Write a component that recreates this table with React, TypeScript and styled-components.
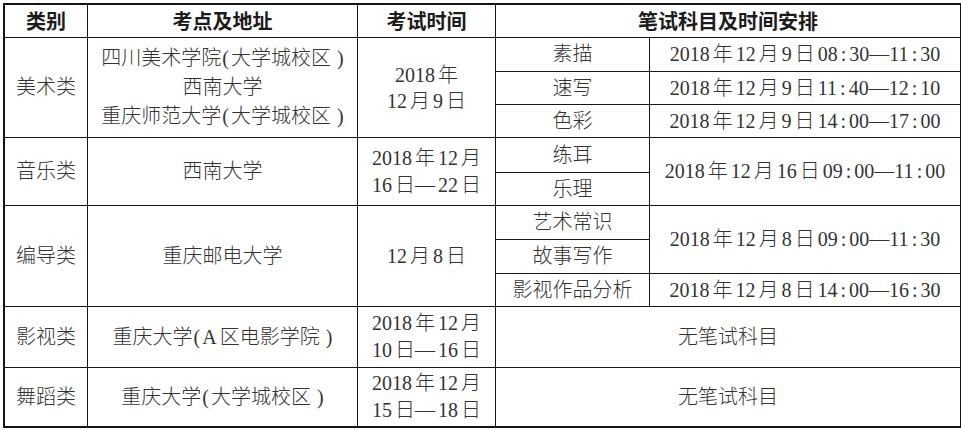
import React from "react";
import styled, { createGlobalStyle } from "styled-components";

const GlobalStyle = createGlobalStyle`
  html, body {
    margin: 0;
    padding: 0;
    background: #ffffff;
  }
`;

type CellData = {
  row: string;
  col: string;
  lines: string[];
  leading?: number;
};

const header: CellData[] = [
  { row: "1", col: "1", lines: ["类别"] },
  { row: "1", col: "2", lines: ["考点及地址"] },
  { row: "1", col: "3", lines: ["考试时间"] },
  { row: "1", col: "4 / span 2", lines: ["笔试科目及时间安排"] },
];

const body: CellData[] = [
  // 美术类
  { row: "2 / span 3", col: "1", lines: ["美术类"] },
  {
    row: "2 / span 3",
    col: "2",
    lines: ["四川美术学院(大学城校区)", "西南大学", "重庆师范大学(大学城校区)"],
    leading: 29,
  },
  { row: "2 / span 3", col: "3", lines: ["2018年", "12月9日"], leading: 26 },
  { row: "2", col: "4", lines: ["素描"] },
  { row: "2", col: "5", lines: ["2018年12月9日08:30—11:30"] },
  { row: "3", col: "4", lines: ["速写"] },
  { row: "3", col: "5", lines: ["2018年12月9日11:40—12:10"] },
  { row: "4", col: "4", lines: ["色彩"] },
  { row: "4", col: "5", lines: ["2018年12月9日14:00—17:00"] },

  // 音乐类
  { row: "5 / span 2", col: "1", lines: ["音乐类"] },
  { row: "5 / span 2", col: "2", lines: ["西南大学"] },
  { row: "5 / span 2", col: "3", lines: ["2018年12月", "16日—22日"] },
  { row: "5", col: "4", lines: ["练耳"] },
  { row: "6", col: "4", lines: ["乐理"] },
  { row: "5 / span 2", col: "5", lines: ["2018年12月16日09:00—11:00"] },

  // 编导类
  { row: "7 / span 3", col: "1", lines: ["编导类"] },
  { row: "7 / span 3", col: "2", lines: ["重庆邮电大学"] },
  { row: "7 / span 3", col: "3", lines: ["12月8日"] },
  { row: "7", col: "4", lines: ["艺术常识"] },
  { row: "8", col: "4", lines: ["故事写作"] },
  { row: "7 / span 2", col: "5", lines: ["2018年12月8日09:00—11:30"] },
  { row: "9", col: "4", lines: ["影视作品分析"] },
  { row: "9", col: "5", lines: ["2018年12月8日14:00—16:30"] },

  // 影视类
  { row: "10", col: "1", lines: ["影视类"] },
  { row: "10", col: "2", lines: ["重庆大学(A区电影学院)"] },
  { row: "10", col: "3", lines: ["2018年12月", "10日—16日"] },
  { row: "10", col: "4 / span 2", lines: ["无笔试科目"] },

  // 舞蹈类
  { row: "11", col: "1", lines: ["舞蹈类"] },
  { row: "11", col: "2", lines: ["重庆大学(大学城校区)"] },
  { row: "11", col: "3", lines: ["2018年12月", "15日—18日"] },
  { row: "11", col: "4 / span 2", lines: ["无笔试科目"] },
];

const isCJK = (s?: string) => !!s && /[\u4e00-\u9fff]/.test(s);

// digits and latin letters get a small gap next to CJK, colons get air on both sides
function typeset(text: string) {
  const parts = text.split(/([0-9A-Za-z]+|:|\(|\))/).filter(Boolean);
  return parts.map((p, i) => {
    if (p === ":") return <Colon key={i}>:</Colon>;
    if (p === "(" || p === ")") {
      return (
        <Paren key={i} $open={p === "("}>
          {p}
        </Paren>
      );
    }
    if (/^[0-9A-Za-z]+$/.test(p)) {
      return (
        <Latin key={i} $left={isCJK(parts[i - 1])} $right={isCJK(parts[i + 1])}>
          {p}
        </Latin>
      );
    }
    return <React.Fragment key={i}>{p}</React.Fragment>;
  });
}

export default function App() {
  return (
    <>
      <GlobalStyle />
      <Table>
        {header.map((c, i) => (
          <HeadCell key={i} $row={c.row} $col={c.col}>
            {c.lines[0]}
          </HeadCell>
        ))}
        {body.map((c, i) => (
          <Cell key={i} $row={c.row} $col={c.col} $leading={c.leading ?? 27}>
            {c.lines.map((line, j) => (
              <Line key={j}>{typeset(line)}</Line>
            ))}
          </Cell>
        ))}
      </Table>
    </>
  );
}

const Table = styled.div`
  display: grid;
  grid-template-columns: 82px 269px 137px 153px 310px;
  grid-template-rows: 32px 33px 32px 32px 34px 32px 33px 33px 32px 60px 58px;
  gap: 1px;
  width: 958px;
  margin: 3px 0 0 3px;
  padding: 2px 1px 2px 2px;
  box-sizing: border-box;
  background: #151515;
`;

const BaseCell = styled.div<{ $row: string; $col: string }>`
  grid-row: ${(p) => p.$row};
  grid-column: ${(p) => p.$col};
  display: flex;
  flex-direction: column;
  align-items: center;
  justify-content: center;
  background: #ffffff;
  text-align: center;
  white-space: nowrap;
`;

const HeadCell = styled(BaseCell)`
  font-family: "Noto Sans CJK SC", "Noto Sans", sans-serif;
  font-size: 20px;
  font-weight: 700;
  color: #1c1c1c;
  line-height: 24px;
`;

const Cell = styled(BaseCell)<{ $leading: number }>`
  font-family: "Liberation Serif", "Noto Sans CJK SC", serif;
  font-size: 20px;
  font-weight: 300;
  color: #333333;
  line-height: ${(p) => p.$leading}px;
`;

const Line = styled.div`
  display: block;
`;

const Latin = styled.span<{ $left: boolean; $right: boolean }>`
  margin-left: ${(p) => (p.$left ? "3px" : "0")};
  margin-right: ${(p) => (p.$right ? "3px" : "0")};
`;

const Colon = styled.span`
  margin: 0 3px;
`;

const Paren = styled.span<{ $open: boolean }>`
  margin: ${(p) => (p.$open ? "0 2px 0 1px" : "0 0 0 6px")};
`;
